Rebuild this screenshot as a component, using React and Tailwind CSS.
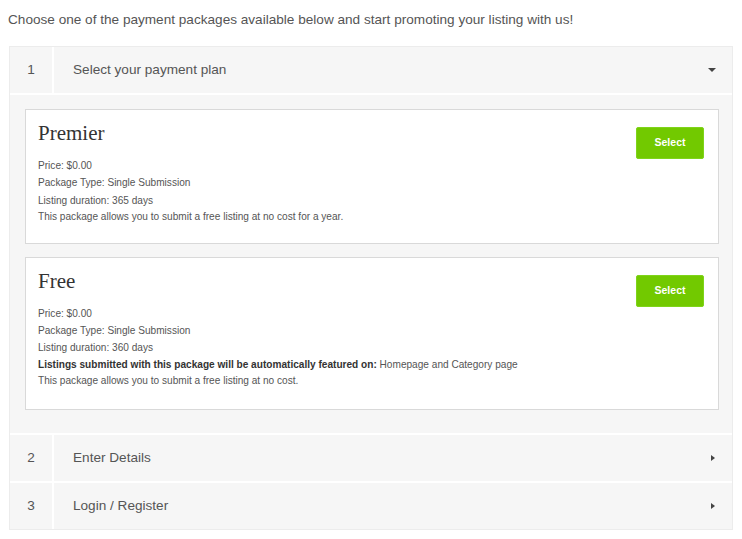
import React from 'react';

const packages = [
    {
        name: 'Premier',
        lines: ['Price: $0.00', 'Package Type: Single Submission', 'Listing duration: 365 days'],
        featured: null,
        description: 'This package allows you to submit a free listing at no cost for a year.',
    },
    {
        name: 'Free',
        lines: ['Price: $0.00', 'Package Type: Single Submission', 'Listing duration: 360 days'],
        featured: 'Homepage and Category page',
        description: 'This package allows you to submit a free listing at no cost.',
    },
];

const StepRow = ({ num, label, open }) => (
    <div className="flex h-[46px] bg-[#f6f6f6]">
        <div className="w-[44px] flex items-center justify-center border-r-2 border-white text-[13.6px] text-[#555]">
            {num}
        </div>
        <div className="flex-1 flex items-center justify-between pl-[19px] pr-[15px] text-[13.6px] text-[#555]">
            <span>{label}</span>
            {open ? (
                <span className="w-0 h-0 border-x-[4px] border-x-transparent border-t-[4px] border-t-[#444] mr-[1px]" />
            ) : (
                <span className="w-0 h-0 border-y-[3.5px] border-y-transparent border-l-[4px] border-l-[#444] mr-[2px]" />
            )}
        </div>
    </div>
);

const PackageCard = ({ pkg }) => (
    <div className={`flex justify-between bg-white border border-[#d9d9d9] pl-[12px] pr-[14px] pt-[12px] ${pkg.featured ? 'pb-[21px]' : 'pb-[19px]'}`}>
        <div>
            <h3 className="text-[21px] leading-[23px] text-[#333] mb-[12px]" style={{ fontFamily: '"Liberation Serif", serif' }}>
                {pkg.name}
            </h3>
            <div className="text-[10.1px] text-[#555]">
                {pkg.lines.map((l) => (
                    <p key={l} className="leading-[17.3px]">{l}</p>
                ))}
                {pkg.featured && (
                    <p className="leading-[16px]">
                        <b className="text-[#333]">Listings submitted with this package will be automatically featured on:</b> {pkg.featured}
                    </p>
                )}
                <p className="leading-[15px]">{pkg.description}</p>
            </div>
        </div>
        <button className="mt-[5px] w-[68px] h-[32px] shrink-0 rounded-[2px] bg-[#72c900] border border-[#7fd41a] text-white font-bold text-[10.5px]">
            Select
        </button>
    </div>
);

export default function App() {
    return (
        <div className="bg-white min-h-[539px]" style={{ fontFamily: '"Liberation Sans", Arial, sans-serif' }}>
            <p className="pt-[11px] pl-[8px] text-[13.6px] leading-[18px] text-[#555]">
                Choose one of the payment packages available below and start promoting your listing with us!
            </p>
            <div className="ml-[9px] mt-[17px] w-[724px] border border-[#ececec] bg-white">
                <StepRow num="1" label="Select your payment plan" open />
                <div className="mt-[2px] bg-[#f6f6f6] pl-[15px] pr-[13px] pt-[14px] pb-[23px] flex flex-col gap-[13px]">
                    {packages.map((p) => (
                        <PackageCard key={p.name} pkg={p} />
                    ))}
                </div>
                <div className="mt-[2px]">
                    <StepRow num="2" label="Enter Details" />
                </div>
                <div className="mt-[2px]">
                    <StepRow num="3" label="Login / Register" />
                </div>
            </div>
        </div>
    );
}
